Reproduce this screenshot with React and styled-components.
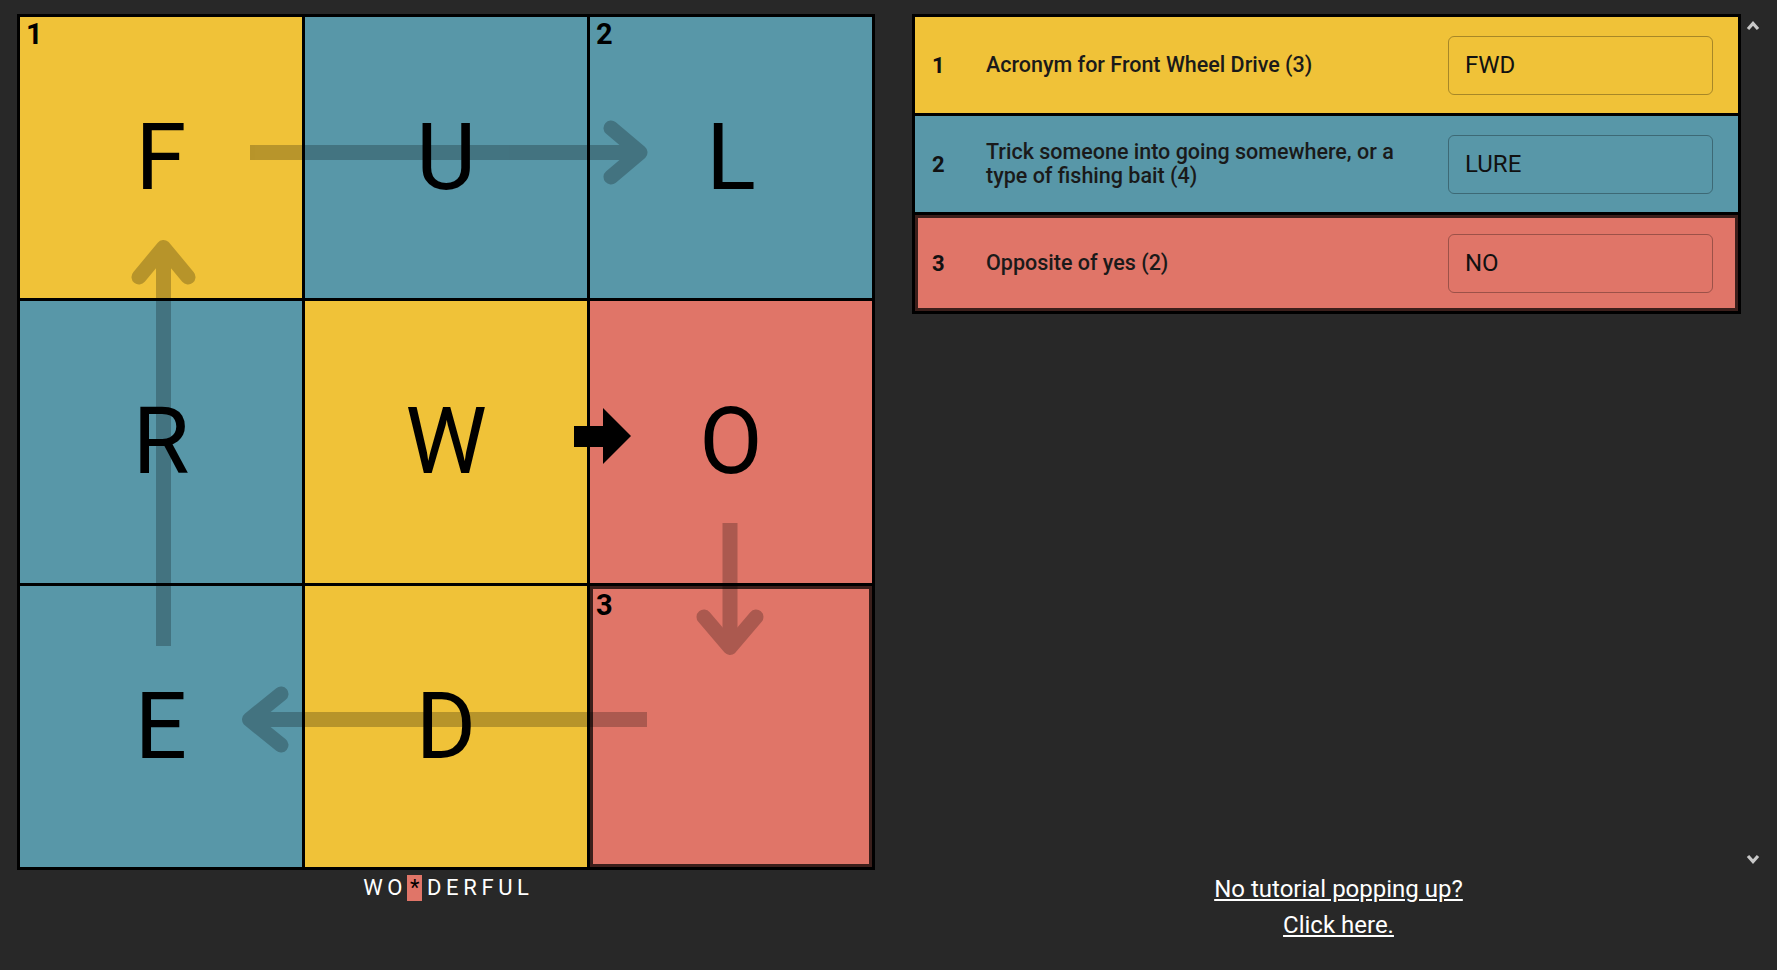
import React from 'react';
import styled, { createGlobalStyle } from 'styled-components';

const COLORS = { yellow: '#F0C238', blue: '#5897A8', red: '#E07568' };

const GlobalStyle = createGlobalStyle`
  html, body { margin: 0; padding: 0; background: #282828; }
  body { font-family: Roboto, "Liberation Sans", sans-serif; overflow: hidden; }
  * { box-sizing: border-box; }
`;

const Page = styled.div`
  display: flex;
  gap: 37px;
  padding: 14px 12px 0 17px;
  height: 970px;
`;

const LeftColumn = styled.div`
  flex: none;
  width: 858px;
  display: flex;
  flex-direction: column;
  align-items: center;
`;

const BoardWrap = styled.div`
  position: relative;
  width: 858px;
  height: 856px;
`;

const Board = styled.div`
  display: grid;
  grid-template-columns: repeat(3, 1fr);
  grid-template-rows: repeat(3, 1fr);
  gap: 3px;
  padding: 3px;
  width: 100%;
  height: 100%;
  background: #000;
`;

const Cell = styled.div`
  position: relative;
  display: flex;
  align-items: center;
  justify-content: center;
  background: ${p => COLORS[p.$color]};
  box-shadow: ${p => (p.$selected ? 'inset 0 0 0 3px #3b1f1b' : 'none')};
  color: #000;
  font-size: 92px;
  font-weight: 400;
`;

const CellNumber = styled.span`
  position: absolute;
  top: ${p => (p.$selected ? 3 : 1)}px;
  left: 6px;
  font-size: 29px;
  font-weight: 700;
  line-height: 1.17;
`;

const Overlay = styled.svg`
  position: absolute;
  inset: 0;
  width: 100%;
  height: 100%;
  pointer-events: none;
`;

const Word = styled.div`
  display: flex;
  gap: 4.6px;
  margin-top: 5px;
  color: #fff;
  font-size: 22px;
  line-height: 26px;
`;

const WordLetter = styled.span`
  padding: ${p => (p.$active ? '0 3px' : '0')};
  background: ${p => (p.$active ? COLORS.red : 'transparent')};
  color: ${p => (p.$active ? '#000' : '#fff')};
`;

const RightColumn = styled.div`
  flex: 1;
  min-width: 0;
  display: flex;
  flex-direction: column;
`;

const ScrollArea = styled.div`
  height: 857px;
  display: flex;
`;

const ClueList = styled.div`
  flex: 1;
  align-self: flex-start;
  display: flex;
  flex-direction: column;
  gap: 3px;
  padding: 3px;
  background: #000;
`;

const ClueRow = styled.div`
  display: flex;
  align-items: center;
  height: 96px;
  padding: 0 25px 0 17px;
  background: ${p => COLORS[p.$color]};
  box-shadow: ${p => (p.$selected ? 'inset 0 0 0 3px #3b1f1b' : 'none')};
`;

const ClueNumber = styled.span`
  flex: none;
  width: 54px;
  font-size: 22px;
  font-weight: 700;
  color: #111;
`;

const ClueText = styled.span`
  flex: 1;
  margin-right: 20px;
  font-size: 21.5px;
  font-weight: 500;
  line-height: 24px;
  color: #1a1a1a;
`;

const ClueInput = styled.input`
  flex: none;
  width: 265px;
  height: 59px;
  padding: 0 16px;
  border: 1px solid rgba(0, 0, 0, 0.3);
  border-radius: 6px;
  background: transparent;
  font-family: Roboto, "Liberation Sans", sans-serif;
  font-size: 24px;
  color: #111;
  outline: none;
`;

const ScrollBar = styled.div`
  flex: none;
  width: 24px;
  display: flex;
  flex-direction: column;
  justify-content: space-between;
  align-items: center;
  padding: 7px 0;
`;

const Links = styled.div`
  display: flex;
  flex-direction: column;
  align-items: center;
  font-size: 24px;
  line-height: 36px;
`;

const Link = styled.a`
  color: #fff;
  text-decoration: underline;
  text-underline-offset: 2px;
`;

const Chevron = ({ down }) => (
  <svg width="14" height="10" viewBox="0 0 14 10">
    <polyline
      points={down ? '2,2 7,7.5 12,2' : '2,8 7,2.5 12,8'}
      fill="none"
      stroke="#c8c8c8"
      strokeWidth="3.2"
      strokeLinejoin="miter"
    />
  </svg>
);

const cells = [
  { l: 'F', c: 'yellow', n: 1 },
  { l: 'U', c: 'blue' },
  { l: 'L', c: 'blue', n: 2 },
  { l: 'R', c: 'blue' },
  { l: 'W', c: 'yellow' },
  { l: 'O', c: 'red' },
  { l: 'E', c: 'blue' },
  { l: 'D', c: 'yellow' },
  { l: '', c: 'red', n: 3, sel: true },
];

const clues = [
  { n: 1, t: 'Acronym for Front Wheel Drive (3)', v: 'FWD', c: 'yellow' },
  { n: 2, t: 'Trick someone into going somewhere, or a type of fishing bait (4)', v: 'LURE', c: 'blue' },
  { n: 3, t: 'Opposite of yes (2)', v: 'NO', c: 'red', sel: true },
];

const word = ['W', 'O', '*', 'D', 'E', 'R', 'F', 'U', 'L'];

function Arrows() {
  return (
    <Overlay viewBox="0 0 858 856">
      <g opacity="0.23" fill="none" stroke="#000" strokeWidth="15" strokeLinejoin="round">
        <path d="M233 138.5 H623" />
        <polyline points="594,114 623,138.5 594,163" strokeLinecap="round" />
        <path d="M713 509 V633.5" />
        <polyline points="687,603 713,633.5 739,603" strokeLinecap="round" />
        <path d="M630 705.5 H232.5" />
        <polyline points="264,680 232.5,705.5 264,731" strokeLinecap="round" />
        <path d="M146.5 632 V233.5" />
        <polyline points="122,263 146.5,233.5 171,263" strokeLinecap="round" />
      </g>
      <path d="M557 412 H586 V394 L614 422 L586 450 V433 H557 Z" fill="#000" />
    </Overlay>
  );
}

export default function App() {
  return (
    <>
      <GlobalStyle />
      <Page>
        <LeftColumn>
          <BoardWrap>
            <Board>
              {cells.map((c, i) => (
                <Cell key={i} $color={c.c} $selected={c.sel}>
                  {c.n && <CellNumber $selected={c.sel}>{c.n}</CellNumber>}
                  {c.l}
                </Cell>
              ))}
            </Board>
            <Arrows />
          </BoardWrap>
          <Word>
            {word.map((ch, i) => (
              <WordLetter key={i} $active={ch === '*'}>
                {ch}
              </WordLetter>
            ))}
          </Word>
        </LeftColumn>
        <RightColumn>
          <ScrollArea>
            <ClueList>
              {clues.map(c => (
                <ClueRow key={c.n} $color={c.c} $selected={c.sel}>
                  <ClueNumber>{c.n}</ClueNumber>
                  <ClueText>{c.t}</ClueText>
                  <ClueInput readOnly value={c.v} />
                </ClueRow>
              ))}
            </ClueList>
            <ScrollBar>
              <Chevron />
              <Chevron down />
            </ScrollBar>
          </ScrollArea>
          <Links>
            <Link href="#">No tutorial popping up?</Link>
            <Link href="#">Click here.</Link>
          </Links>
        </RightColumn>
      </Page>
    </>
  );
}
